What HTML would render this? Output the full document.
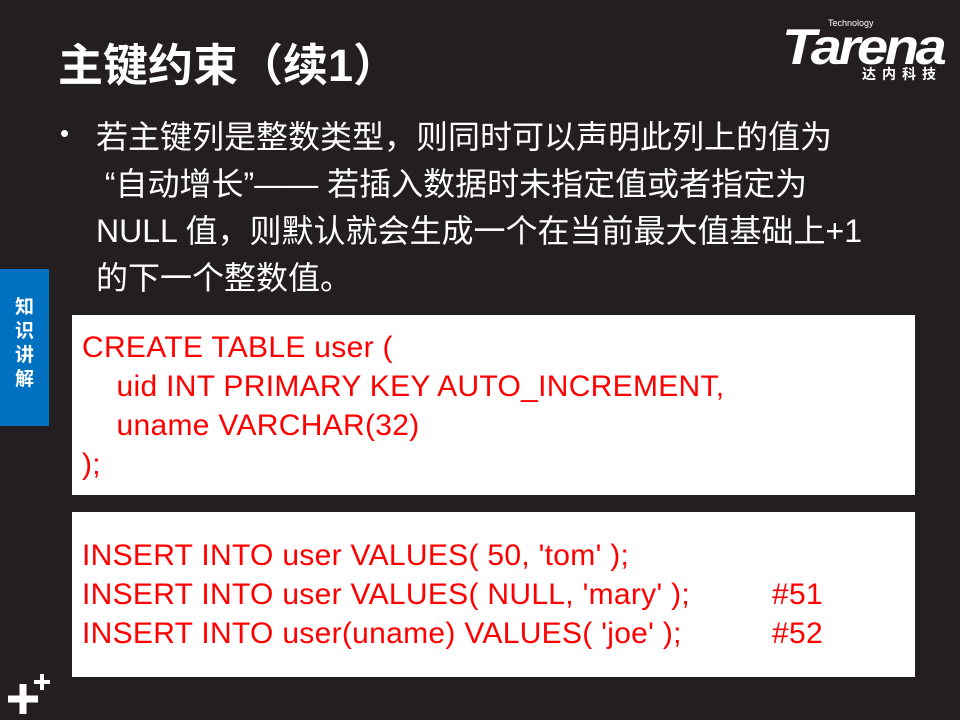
<!DOCTYPE html>
<html><head><meta charset="utf-8"><style>
body{margin:0;width:960px;height:720px;background:#231f20;position:relative;overflow:hidden;font-family:"Liberation Sans","Noto Sans CJK SC",sans-serif;}
.t{position:absolute;left:58px;top:40px;color:#fff;font-size:45px;font-weight:bold;line-height:52px;}
.logo{position:absolute;left:782px;top:20px;color:#fff;}
.logo .big{position:absolute;left:0;top:4px;font-size:50px;font-weight:bold;font-style:italic;letter-spacing:-3px;line-height:46px;white-space:nowrap;transform:scaleX(1.12);transform-origin:left;}
.logo .tech{position:absolute;left:46px;top:-2px;font-size:9px;}
.logo .cn{position:absolute;left:80px;top:44px;font-size:14px;font-weight:bold;letter-spacing:6px;white-space:nowrap;}
.b{position:absolute;left:96px;top:114px;color:#fff;font-size:32px;line-height:47px;white-space:nowrap;}
.dot{position:absolute;left:60px;top:118px;color:#fff;font-size:26px;}
.tab{position:absolute;left:0;top:269px;width:49px;height:157px;background:#0070c0;color:#fff;font-size:19px;font-weight:bold;text-align:center;line-height:24px;padding-top:27px;box-sizing:border-box;}
.box{position:absolute;left:72px;width:843px;background:#fff;color:#f00;font-size:30px;line-height:39px;box-sizing:border-box;padding-left:10px;white-space:pre;letter-spacing:0.3px;}
.h{position:absolute;left:775px;}
</style></head><body>
<div class="t">主键约束（续1）</div>
<div class="logo"><div class="tech">Technology</div><div class="big">Tarena</div><div class="cn">达内科技</div></div>
<div class="dot">•</div>
<div class="b">若主键列是整数类型，则同时可以声明此列上的值为<br>&nbsp;“自动增长”—— 若插入数据时未指定值或者指定为<br>NULL 值，则默认就会生成一个在当前最大值基础上+1<br>的下一个整数值。</div>
<div class="tab">知<br>识<br>讲<br>解</div>
<div class="box" style="top:315px;height:180px;padding-top:13px;">CREATE TABLE user (
    uid INT PRIMARY KEY AUTO_INCREMENT,
    uname VARCHAR(32)
);</div>
<div class="box" style="top:512px;height:165px;padding-top:24px;">INSERT INTO user VALUES( 50, 'tom' );
INSERT INTO user VALUES( NULL, 'mary' );<span class="h" style="left:700px">#51</span>
INSERT INTO user(uname) VALUES( 'joe' );<span class="h" style="left:700px">#52</span></div>
<svg style="position:absolute;left:6px;top:672px" width="44" height="44"><path d="M2 27h30M17 12v30" stroke="#fff" stroke-width="7"/><path d="M28 10h16M36 2v16" stroke="#fff" stroke-width="4"/></svg>
</body></html>
